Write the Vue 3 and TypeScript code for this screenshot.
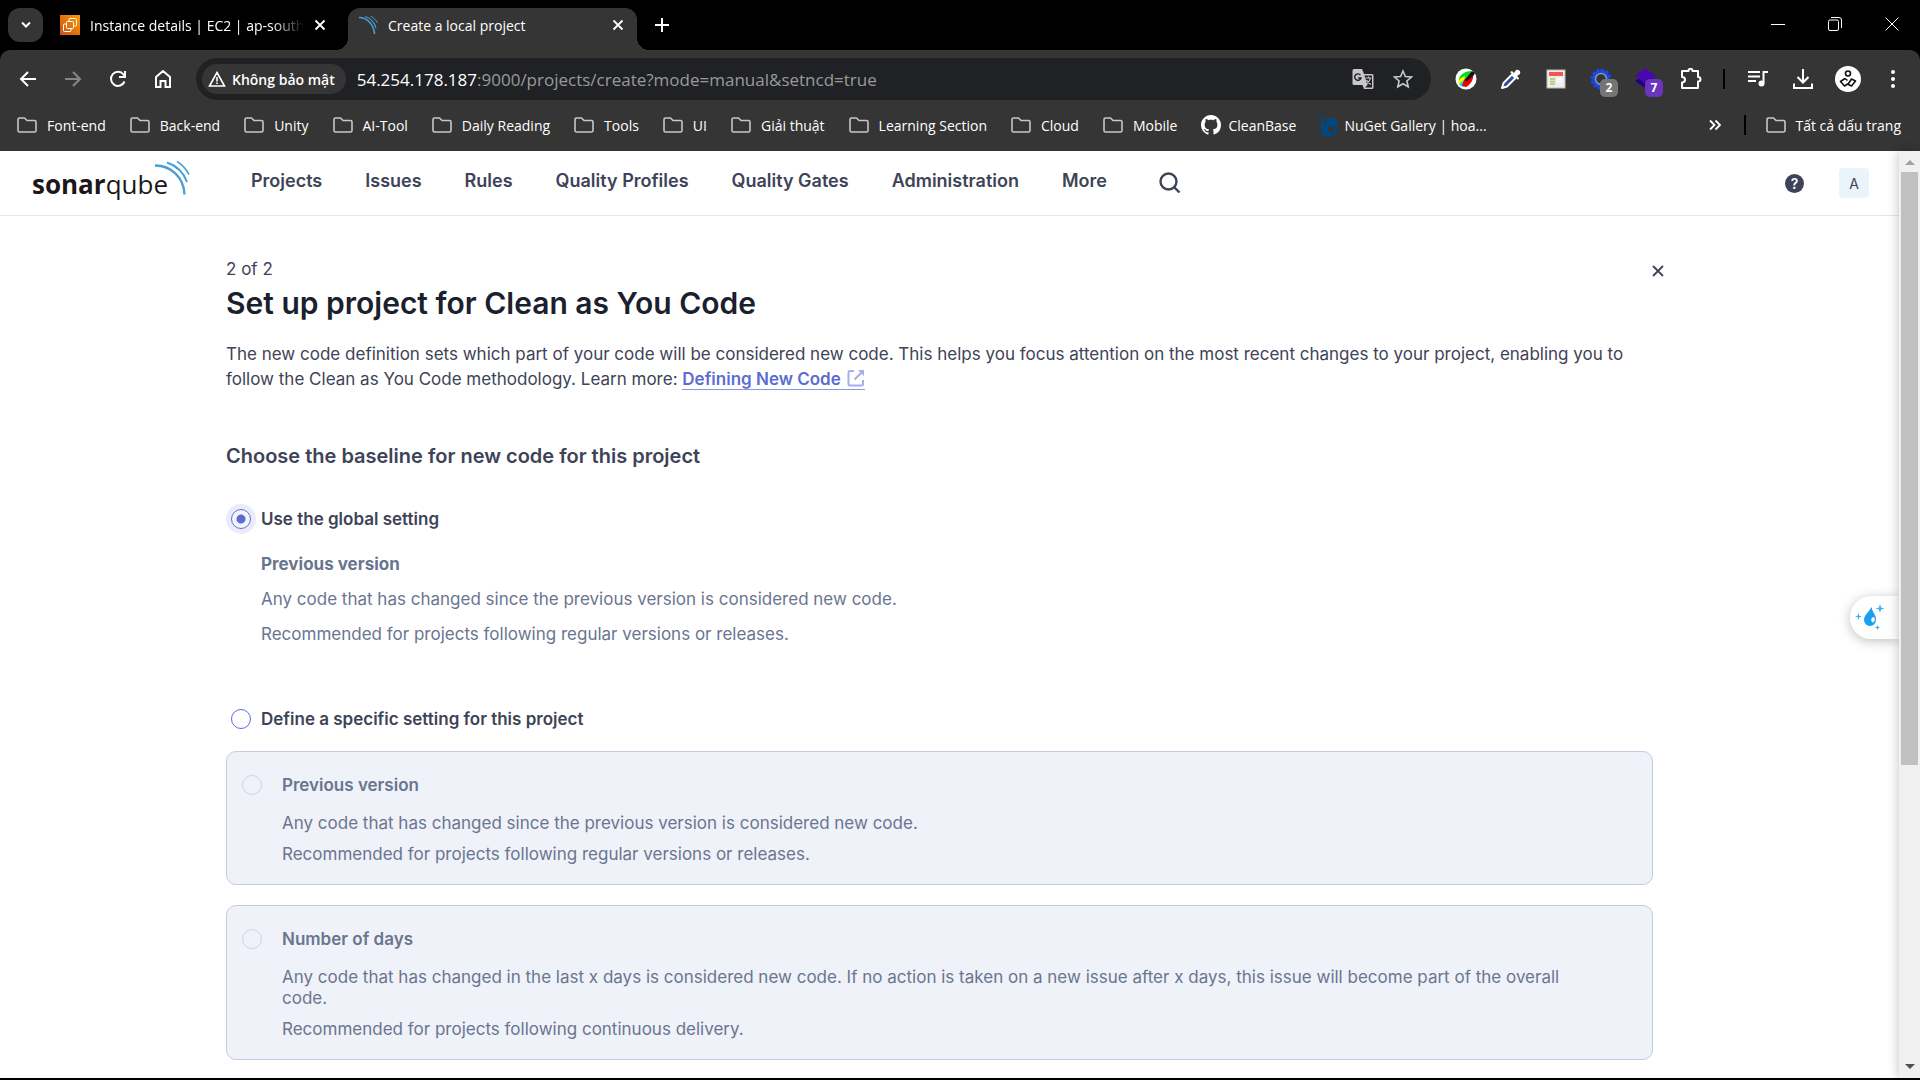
<script setup lang="ts">
import { ref } from 'vue'

interface Bookmark {
  label: string
  kind: 'folder' | 'github' | 'nuget'
}

interface Baseline {
  id: string
  title: string
  text: string
  advice: string
}

const bookmarks: Bookmark[] = [
  { label: 'Font-end', kind: 'folder' },
  { label: 'Back-end', kind: 'folder' },
  { label: 'Unity', kind: 'folder' },
  { label: 'AI-Tool', kind: 'folder' },
  { label: 'Daily Reading', kind: 'folder' },
  { label: 'Tools', kind: 'folder' },
  { label: 'UI', kind: 'folder' },
  { label: 'Giải thuật', kind: 'folder' },
  { label: 'Learning Section', kind: 'folder' },
  { label: 'Cloud', kind: 'folder' },
  { label: 'Mobile', kind: 'folder' },
  { label: 'CleanBase', kind: 'github' },
  { label: 'NuGet Gallery | hoa...', kind: 'nuget' },
]

const navItems = ['Projects', 'Issues', 'Rules', 'Quality Profiles', 'Quality Gates', 'Administration', 'More']

const baselines: Baseline[] = [
  {
    id: 'previous-version',
    title: 'Previous version',
    text: 'Any code that has changed since the previous version is considered new code.',
    advice: 'Recommended for projects following regular versions or releases.',
  },
  {
    id: 'number-of-days',
    title: 'Number of days',
    text: 'Any code that has changed in the last x days is considered new code. If no action is taken on a new issue after x days, this issue will become part of the overall code.',
    advice: 'Recommended for projects following continuous delivery.',
  },
]

const scope = ref<'global' | 'specific'>('global')
const baseline = ref('')
const path = ref(':9000/projects/create?mode=manual&setncd=true')
</script>

<template>
  <div class="window">
    <header class="tabs">
      <button class="tab-search" aria-label="Search tabs">
        <svg width="12" height="8" viewBox="0 0 12 8"><path d="M2 1.5l4 4 4-4" fill="none" stroke="#fff" stroke-width="2" /></svg>
      </button>
      <div class="tab">
        <svg width="20" height="20" viewBox="0 0 20 20">
          <defs>
            <linearGradient id="ec2" x1="0" y1="1" x2="1" y2="0">
              <stop offset="0" stop-color="#c8511b" />
              <stop offset="1" stop-color="#f90" />
            </linearGradient>
          </defs>
          <rect width="20" height="20" fill="url(#ec2)" />
          <g fill="none" stroke="#fff" stroke-width="1">
            <rect x="6.500" y="6.500" width="7" height="7" rx="1" />
            <path d="M9 6V4.500a1 1 0 0 1 1-1h5.500a1 1 0 0 1 1 1V10a1 1 0 0 1-1 1H14M6 9H4.500a1 1 0 0 0-1 1v5.500a1 1 0 0 0 1 1H10a1 1 0 0 0 1-1V14" />
          </g>
        </svg>
        <span class="tab-title faded">Instance details | EC2 | ap-south</span>
        <button class="tab-close" aria-label="Close tab">
          <svg width="12" height="12" viewBox="0 0 12 12"><path d="M1.500 1.500l9 9M10.500 1.500l-9 9" stroke="#fff" stroke-width="1.800" /></svg>
        </button>
      </div>
      <div class="tab active">
        <svg width="20" height="20" viewBox="0 0 20 20" fill="none" stroke="#4b9fd5">
          <path d="M1 2.500c8 0 15 7 15.500 16.500" stroke-width="1.600" />
          <path d="M7 1.500c5 1.500 9.500 6 11 11.500" stroke-width="1.200" />
          <path d="M12.500 1c3 1.500 5.500 4 7 7" stroke-width="1" />
        </svg>
        <span class="tab-title">Create a local project</span>
        <button class="tab-close" aria-label="Close tab">
          <svg width="12" height="12" viewBox="0 0 12 12"><path d="M1.500 1.500l9 9M10.500 1.500l-9 9" stroke="#fff" stroke-width="1.800" /></svg>
        </button>
      </div>
      <button class="new-tab" aria-label="New tab">
        <svg width="14" height="14" viewBox="0 0 14 14"><path d="M7 0v14M0 7h14" stroke="#fff" stroke-width="2" /></svg>
      </button>
      <div class="window-controls">
        <button aria-label="Minimize"><svg width="14" height="14" viewBox="0 0 14 14"><path d="M0 7.500h14" stroke="#fff" /></svg></button>
        <button aria-label="Restore">
          <svg width="14" height="14" viewBox="0 0 14 14" fill="none" stroke="#fff">
            <rect x="0.500" y="3" width="10" height="10.500" rx="1.500" />
            <path d="M3 .5h8a2.500 2.500 0 0 1 2.500 2.500v8" />
          </svg>
        </button>
        <button aria-label="Close"><svg width="14" height="14" viewBox="0 0 14 14"><path d="M.5.5l13 13M13.500.5l-13 13" stroke="#fff" /></svg></button>
      </div>
    </header>

    <div class="chrome">
      <div class="toolbar">
        <div class="nav-buttons">
          <button aria-label="Back"><svg width="18" height="18" viewBox="0 0 18 18" fill="none" stroke="#fff" stroke-width="2"><path d="M17 9H2M9 2L2 9l7 7" /></svg></button>
          <button aria-label="Forward" disabled><svg width="18" height="18" viewBox="0 0 18 18" fill="none" stroke="#868686" stroke-width="2"><path d="M1 9h15M9 2l7 7-7 7" /></svg></button>
          <button aria-label="Reload">
            <svg width="18" height="18" viewBox="0 0 18 18" fill="none" stroke="#fff" stroke-width="2"><path d="M15.500 11.500A7 7 0 1 1 14.500 4.500L16 6.500" /><path d="M16 1v6h-6" /></svg>
          </button>
          <button aria-label="Home"><svg width="18" height="18" viewBox="0 0 18 18" fill="none" stroke="#fff" stroke-width="2"><path d="M2 7l7-6 7 6v10h-4.500v-6h-5v6H2z" /></svg></button>
        </div>
        <div class="address">
          <button class="chip">
            <svg width="18" height="16" viewBox="0 0 18 16" fill="none" stroke="#fff" stroke-width="1.600"><path d="M9 1.500L16.500 15h-15z" /><path d="M9 6v4.500M9 11.500v1.600" /></svg>
            Không bảo mật
          </button>
          <span class="host">54.254.178.187</span>
          <input v-model="path" class="path" type="text" aria-label="Address" />
          <button aria-label="Translate">
            <svg width="22" height="22" viewBox="0 0 22 22">
              <path d="M2 1h8l2 5h8a1.500 1.500 0 0 1 1.500 1.500v12a1.500 1.500 0 0 1-1.500 1.500h-8l-1.500-4H2a1.500 1.500 0 0 1-1.500-1.500v-13A1.500 1.500 0 0 1 2 1z" fill="#c7c7c7" />
              <path d="M12.500 7.500h7.500v12h-7l2.500-2.500z" fill="#202124" />
              <path d="M8.500 7.200A3.200 3.200 0 1 0 9 10H6.200" fill="none" stroke="#202124" stroke-width="1.400" />
              <path d="M13.500 10h6M16.500 8.500V10M18.500 10c-.5 2.500-2 4.500-4 6M14.500 12c1 2 2.500 3.500 4.500 4.500" fill="none" stroke="#c7c7c7" stroke-width="1.200" />
            </svg>
          </button>
          <button aria-label="Bookmark this page">
            <svg width="20" height="20" viewBox="0 0 20 20" fill="none" stroke="#c7c7c7" stroke-width="1.600"><path d="M10 2l2.400 5.500 6 .5-4.500 4 1.300 5.800L10 14.700l-5.200 3.100L6.100 12 1.600 8l6-.5z" /></svg>
          </button>
        </div>
        <div class="extensions">
          <button aria-label="Color picker extension">
            <svg width="22" height="22" viewBox="0 0 22 22">
              <circle cx="11" cy="11" r="10.500" fill="#fff" />
              <path d="M4 13C3 8 9 3 17 3c-2 3-6 8-12 13z" fill="#0d2" />
              <path d="M3 14c1-3 4-5 7-6l-1 6-2 4c-2 0-4-2-4-4z" fill="#ff0" />
              <path d="M4 16l5-4 1 6c-2 1-5 0-6-2z" fill="#0df" />
              <path d="M7 18l2-6 8-8c3 4 0 12-6 15z" fill="#e00" />
              <path d="M10 12l6-8a2 2 0 0 1 3 3l-7 6z" fill="#111" />
            </svg>
          </button>
          <button aria-label="Eyedropper extension">
            <svg width="22" height="22" viewBox="0 0 22 22">
              <path d="M2 20l1.500-5L12 6.500l3.500 3.500L7 18.500z" fill="#2b4a9f" stroke="#fff" stroke-width="2" stroke-linejoin="round" />
              <path d="M10 4l2-1 2 2 2-3a3 3 0 0 1 4 4l-3 2 2 2-1 2z" fill="#fff" />
            </svg>
          </button>
          <button aria-label="Page notes extension">
            <svg width="20" height="20" viewBox="0 0 20 20">
              <rect x="1" y="1" width="18" height="18" fill="#eee" stroke="#bbb" />
              <rect x="3" y="3" width="14" height="4" fill="#f5564f" />
              <path d="M4 10h5M4 12.500h5M4 15h5" stroke="#9bd05b" stroke-width="1.500" />
              <path d="M11 10h5M11 12.500h5" stroke="#fff" stroke-width="1.500" />
            </svg>
          </button>
          <button class="badged" aria-label="Gear extension, 2">
            <svg width="22" height="22" viewBox="0 0 22 22" fill="none">
              <circle cx="11" cy="11" r="9" stroke="#1548f5" stroke-width="3" stroke-dasharray="2.800 1.900" />
              <circle cx="11" cy="11" r="7.500" stroke="#1548f5" stroke-width="2.500" />
              <circle cx="11" cy="11" r="5.500" stroke="#8b97ad" stroke-width="1.500" />
            </svg>
            <span class="badge">2</span>
          </button>
          <button class="badged" aria-label="Layers extension, 7">
            <svg width="22" height="22" viewBox="0 0 22 22">
              <path d="M0 13l11-7 11 7-9 9z" fill="#230078" />
              <path d="M0 8l10-8 11 8-10 8z" fill="#4a06b0" />
            </svg>
            <span class="badge violet">7</span>
          </button>
          <button aria-label="Extensions">
            <svg width="22" height="22" viewBox="0 0 22 22" fill="none" stroke="#fff" stroke-width="2" stroke-linejoin="round"><path d="M2 3h6.500c0-3 4-3 4 0H18v6c3.300 0 3.300 4.500 0 4.500V20H2v-5.500c4 0 4-5.500 0-5.500z" /></svg>
          </button>
        </div>
        <span class="divider"></span>
        <div class="extensions">
          <button aria-label="Media controls">
            <svg width="22" height="20" viewBox="0 0 22 20" fill="none" stroke="#fff" stroke-width="2"><path d="M1 3h12M1 7.500h12M1 12h8M16.500 14V3H21" /><circle cx="14.500" cy="14.500" r="2" fill="#fff" /></svg>
          </button>
          <button aria-label="Downloads">
            <svg width="22" height="22" viewBox="0 0 22 22" fill="none" stroke="#fff" stroke-width="2"><path d="M11 1v13M5.500 9l5.500 5.500L16.500 9M2 15.500V20h18v-4.500" /></svg>
          </button>
          <button aria-label="Profile">
            <svg width="26" height="26" viewBox="0 0 26 26" fill="none" stroke="#111" stroke-width="1.600">
              <circle cx="13" cy="13" r="13" fill="#fff" stroke="none" />
              <circle cx="13" cy="7.500" r="2.500" />
              <path d="M10 12.500L5.500 15.500l4 4.500 4-2.500 3-4.500 4 2-4 5-3-1.500M10 12.500l2.500 2" stroke-linejoin="round" />
            </svg>
          </button>
          <button aria-label="Menu"><svg width="4" height="18" viewBox="0 0 4 18" fill="#fff"><circle cx="2" cy="2" r="2" /><circle cx="2" cy="9" r="2" /><circle cx="2" cy="16" r="2" /></svg></button>
        </div>
      </div>

      <nav class="bookmarks" aria-label="Bookmarks">
        <a v-for="item in bookmarks" :key="item.label" href="#" :class="['bookmark', item.kind]">
          <svg v-if="item.kind === 'folder'" width="20" height="16" viewBox="0 0 20 16" fill="none" stroke="#c7c7c7" stroke-width="1.600"><path d="M1 13.500v-11A1.500 1.500 0 0 1 2.500 1h5L10 3.500h7.500A1.500 1.500 0 0 1 19 5v8.500a1.500 1.500 0 0 1-1.500 1.500h-15A1.500 1.500 0 0 1 1 13.500z" /></svg>
          <svg v-else-if="item.kind === 'github'" width="20" height="20" viewBox="0 0 16 16" fill="#fff"><path d="M8 0C3.580 0 0 3.580 0 8c0 3.540 2.290 6.530 5.470 7.590.4.070.55-.17.55-.38 0-.19-.01-.82-.01-1.490-2.010.37-2.530-.49-2.690-.94-.09-.23-.48-.94-.82-1.130-.28-.15-.68-.52-.01-.53.63-.01 1.080.58 1.230.82.72 1.210 1.870.87 2.330.66.07-.52.28-.87.51-1.070-1.780-.2-3.640-.89-3.640-3.950 0-.87.31-1.590.82-2.150-.08-.2-.36-1.020.08-2.120 0 0 .67-.21 2.200.82.64-.18 1.320-.27 2-.27s1.360.09 2 .27c1.530-1.040 2.200-.82 2.200-.82.44 1.100.16 1.920.08 2.120.51.56.82 1.270.82 2.150 0 3.070-1.870 3.750-3.650 3.950.29.25.54.73.54 1.480 0 1.070-.01 1.930-.01 2.200 0 .21.15.46.55.38A8.010 8.010 0 0 0 16 8c0-4.420-3.580-8-8-8z" /></svg>
          <svg v-else width="20" height="24" viewBox="0 0 20 24"><circle cx="2" cy="2" r="1.500" fill="#004880" /><rect x="4" y="5" width="16" height="18" rx="5.500" fill="#004880" /><circle cx="8" cy="10" r="2" fill="#353535" /><circle cx="14" cy="16.500" r="3.300" fill="#353535" /></svg>
          {{ item.label }}
        </a>
        <button class="overflow" aria-label="More bookmarks"><svg width="12" height="12" viewBox="0 0 12 12" fill="none" stroke="#fff" stroke-width="1.800"><path d="M1 1.500L5.500 6 1 10.500M6.500 1.500L11 6l-4.500 4.500" /></svg></button>
        <span class="divider"></span>
        <a href="#" class="bookmark all">
          <svg width="20" height="16" viewBox="0 0 20 16" fill="none" stroke="#c7c7c7" stroke-width="1.600"><path d="M1 13.500v-11A1.500 1.500 0 0 1 2.500 1h5L10 3.500h7.500A1.500 1.500 0 0 1 19 5v8.500a1.500 1.500 0 0 1-1.500 1.500h-15A1.500 1.500 0 0 1 1 13.500z" /></svg>
          Tất cả dấu trang
        </a>
      </nav>
    </div>

    <div class="viewport">
      <div class="page">
        <header class="site-header">
          <a href="#" class="logo" aria-label="SonarQube">
            <span class="logo-text"><b>sonar</b>qube</span>
            <svg width="36" height="34" viewBox="0 0 36 34" fill="none" stroke="#4b9fd5">
              <path d="M1 4.500c16 0 29 12 29.500 29" stroke-width="2.400" />
              <path d="M13 1.500c9 3 16.500 10 20 19.500" stroke-width="2" />
              <path d="M23 .5c5 3 9 7.500 12 13" stroke-width="1.600" />
            </svg>
          </a>
          <nav class="site-nav" aria-label="Main">
            <a v-for="item in navItems" :key="item" href="#">{{ item }}</a>
          </nav>
          <button class="search" aria-label="Search">
            <svg width="22" height="22" viewBox="0 0 22 22" fill="none" stroke="#3e4357" stroke-width="2.400"><circle cx="9.500" cy="9.500" r="8" /><path d="M15 15l5.500 5.500" /></svg>
          </button>
          <button class="help" aria-label="Help">?</button>
          <button class="avatar" aria-label="Account">A</button>
        </header>

        <main class="content">
          <div class="step-row">
            <span>2 of 2</span>
            <button class="close" aria-label="Close">
              <svg width="12" height="12" viewBox="0 0 12 12"><path d="M1 1l10 10M11 1L1 11" stroke="#3e4357" stroke-width="1.800" /></svg>
            </button>
          </div>
          <h1>Set up project for Clean as You Code</h1>
          <p class="intro">
            The new code definition sets which part of your code will be considered new code. This helps you focus attention on the most recent changes to your project, enabling you to<br />
            follow the Clean as You Code methodology. Learn more:
            <a href="#" class="doc-link">Defining New Code <svg width="18" height="18" viewBox="0 0 18 18" fill="none" stroke="#a6adf0" stroke-width="2"><path d="M7 2H3a1.500 1.500 0 0 0-1.500 1.500V15A1.500 1.500 0 0 0 3 16.500h11.500A1.500 1.500 0 0 0 16 15v-4M7.500 10.500L15 3" /><path d="M11 1h6v6z" fill="#a6adf0" stroke="none" /></svg></a>
          </p>

          <h2>Choose the baseline for new code for this project</h2>

          <div class="choice">
            <input id="scope-global" v-model="scope" type="radio" name="scope" value="global" />
            <label for="scope-global">Use the global setting</label>
          </div>
          <div class="global-info">
            <b>Previous version</b>
            <span>Any code that has changed since the previous version is considered new code.</span>
            <span>Recommended for projects following regular versions or releases.</span>
          </div>

          <div class="choice">
            <input id="scope-specific" v-model="scope" type="radio" name="scope" value="specific" />
            <label for="scope-specific">Define a specific setting for this project</label>
          </div>
          <div class="cards">
            <section v-for="item in baselines" :key="item.id" class="card">
              <input :id="item.id" v-model="baseline" type="radio" name="baseline" :value="item.id" :disabled="scope === 'global'" />
              <div class="card-body">
                <label :for="item.id">{{ item.title }}</label>
                <p>{{ item.text }}</p>
                <p>{{ item.advice }}</p>
              </div>
            </section>
          </div>
        </main>

        <button class="assistant" aria-label="Assistant">
          <svg width="30" height="28" viewBox="0 0 30 28">
            <path d="M16.500 3c1 6 5 8 4.500 13a6 6 0 0 1-12 0c0-5 5-8 7.500-13z" fill="#189ff2" />
            <path d="M18.500 13a3 3 0 0 1-.8 5.500 3 3 0 0 1 .8-5.500z" fill="#fff" />
            <path d="M25 0l1 3.500 3.500 1-3.500 1-1 3.500-1-3.500-3.500-1 3.500-1zM3.500 9l.8 2.700L7 12.500l-2.700.8-.8 2.700-.8-2.700L0 12.500l2.700-.8zM22.500 21l.7 1.800 1.800.7-1.800.7-.7 1.800-.7-1.800-1.800-.7 1.800-.7z" fill="#35aff5" />
          </svg>
        </button>
      </div>

      <div class="scrollbar" aria-hidden="true">
        <svg width="10" height="5" viewBox="0 0 10 5"><path d="M5 0l5 5H0z" fill="#a3a3a3" /></svg>
        <div class="track"><div class="thumb"></div></div>
        <svg width="10" height="5" viewBox="0 0 10 5"><path d="M5 5l5-5H0z" fill="#505050" /></svg>
      </div>
    </div>
  </div>
</template>

<style>
body {
  margin: 0;
  background: #000;
}
</style>

<style scoped>
* {
  box-sizing: border-box;
}

button {
  display: flex;
  align-items: center;
  justify-content: center;
  padding: 0;
  border: 0;
  background: none;
  font: inherit;
  color: inherit;
}

svg {
  flex: none;
}

a {
  color: inherit;
  text-decoration: none;
}

.window {
  display: flex;
  flex-direction: column;
  height: 100vh;
  padding-bottom: 2px;
  overflow: hidden;
  background: #000;
  color: #fff;
  font-family: 'Open Sans', 'Noto Sans', sans-serif;
  font-size: 14px;
}

/* Tab strip */
.tabs {
  display: flex;
  flex: none;
  height: 50px;
  padding: 8px 0 0 8px;
}

.tab-search {
  width: 35px;
  height: 34px;
  border-radius: 12px;
  background: #353535;
}

.tab {
  display: flex;
  align-items: center;
  gap: 10px;
  width: 305px;
  height: 42px;
  padding: 0 22px 8px 17px;
}

.tab.active {
  position: relative;
  width: 289px;
  padding: 0 13px 8px 10px;
  border-radius: 12px 12px 0 0;
  background: #353535;
}

.tab.active::before,
.tab.active::after {
  content: '';
  position: absolute;
  bottom: 0;
  width: 12px;
  height: 12px;
}

.tab.active::before {
  right: 100%;
  background: radial-gradient(circle at 0 0, transparent 12px, #353535 12px);
}

.tab.active::after {
  left: 100%;
  background: radial-gradient(circle at 100% 0, transparent 12px, #353535 12px);
}

.tab-title {
  flex: 1;
  white-space: nowrap;
}

.faded {
  mask-image: linear-gradient(90deg, #000 85%, transparent);
}

.new-tab {
  width: 50px;
  height: 34px;
}

.window-controls {
  display: flex;
  margin-left: auto;
}

.window-controls button {
  width: 57px;
  height: 32px;
}

/* Toolbar */
.chrome {
  flex: none;
  height: 101px;
  border-radius: 10px 10px 0 0;
  background: #353535;
}

.toolbar {
  display: flex;
  align-items: center;
  height: 58px;
  padding: 0 5px;
}

.nav-buttons,
.extensions {
  display: flex;
  align-items: center;
}

.nav-buttons button,
.extensions button {
  width: 45px;
  height: 40px;
}

.address {
  display: flex;
  flex: 1;
  align-items: center;
  height: 42px;
  margin: 0 12px 0 11px;
  padding: 0 8px 0 6px;
  border-radius: 21px;
  background: #202124;
  font-size: 17px;
}

.chip {
  gap: 6px;
  height: 30px;
  margin-right: 11px;
  padding: 0 11px 0 6px;
  border-radius: 15px;
  background: #353535;
  font-size: 14px;
  font-weight: 600;
}

.path {
  flex: 1;
  min-width: 0;
  padding: 0;
  border: 0;
  outline: 0;
  background: none;
  color: #9a9a9c;
  font: inherit;
}

.address > button:not(.chip) {
  width: 40px;
}

.badged {
  position: relative;
}

.badge {
  position: absolute;
  right: 5px;
  bottom: 2px;
  width: 18px;
  height: 18px;
  border-radius: 5px;
  background: #757575;
  font-size: 12px;
  font-weight: 700;
  line-height: 18px;
  text-align: center;
}

.violet {
  background: #6a35bd;
}

.divider {
  flex: none;
  width: 2px;
  height: 20px;
  margin: 0 10px;
  background: #000;
}

/* Bookmarks bar */
.bookmarks {
  display: flex;
  align-items: center;
  height: 34px;
  padding: 0 19px 0 17px;
}

.bookmark {
  display: flex;
  align-items: center;
  gap: 10px;
  margin-right: 24px;
  white-space: nowrap;
}

.github,
.nuget {
  gap: 7px;
}

.nuget {
  margin-left: -3px;
}

.overflow {
  width: 24px;
  height: 28px;
  margin-left: auto;
  margin-right: 7px;
}

.all {
  margin: 0 0 0 10px;
}

/* Page */
.viewport {
  display: flex;
  flex: 1;
  min-height: 0;
  background: #fff;
}

.page {
  flex: 1;
  position: relative;
  overflow: hidden;
  color: #3e4357;
  font-family: Inter, sans-serif;
  font-size: 17px;
}

.site-header {
  display: flex;
  align-items: center;
  height: 65px;
  padding: 0 30px 0 32px;
  border-bottom: 1px solid #e6e6e9;
}

.logo {
  display: flex;
  align-items: flex-start;
  width: 219px;
  height: 44px;
}

.logo-text {
  padding-top: 5px;
  color: #1b171b;
  font-family: 'Open Sans', sans-serif;
  font-size: 26px;
  line-height: 36px;
}

.logo svg {
  margin-left: -14px;
}

.site-nav {
  display: flex;
  gap: 43px;
  padding-bottom: 6px;
  font-weight: 600;
  font-size: 18px;
}

.search {
  width: 42px;
  height: 42px;
  margin-left: 42px;
}

.help {
  width: 19px;
  height: 19px;
  margin-left: auto;
  border-radius: 50%;
  background: #3e4357;
  color: #fff;
  font-size: 14px;
  font-weight: 600;
}

.avatar {
  width: 30px;
  height: 30px;
  margin-left: 35px;
  border-radius: 4px;
  background: #e9f4fb;
  font-size: 14px;
}

.content {
  padding: 40px 226px 0;
}

.step-row {
  display: flex;
  align-items: center;
  justify-content: space-between;
  height: 25px;
}

.close {
  width: 30px;
  height: 30px;
  padding-top: 4px;
}

h1 {
  margin: 4px 0 21px;
  color: #1b1f2e;
  font-size: 30px;
  font-weight: 600;
  line-height: 36px;
}

.intro {
  margin: 0;
  line-height: 25px;
  white-space: nowrap;
}

.doc-link {
  border-bottom: 1px solid #8c94e8;
  color: #5d6cd0;
  font-weight: 600;
}

.doc-link svg {
  margin-left: 2px;
  vertical-align: -2px;
}

h2 {
  margin: 52px 0 38px;
  font-size: 20px;
  font-weight: 600;
  line-height: 25px;
}

input[type='radio'] {
  flex: none;
  width: 20px;
  height: 20px;
  margin: 0;
  border: 1px solid #5d6cd0;
  border-radius: 50%;
  appearance: none;
}

input[type='radio']:checked {
  background: radial-gradient(circle, #5d6cd0 4px, #f3f4fe 5px);
  box-shadow: 0 0 0 5px #ebecfb;
}

input[type='radio']:disabled {
  border-color: #cfd3e8;
}

.choice {
  display: flex;
  align-items: center;
  gap: 10px;
  height: 24px;
  padding-left: 5px;
}

label {
  font-weight: 600;
}

.global-info {
  display: flex;
  flex-direction: column;
  gap: 10px;
  padding: 21px 0 60px 35px;
  color: #6a7590;
  line-height: 25px;
}

.cards {
  display: flex;
  flex-direction: column;
  gap: 20px;
  margin: 20px 20px 0 0;
}

.card {
  display: flex;
  gap: 20px;
  padding: 23px 52px 19px 15px;
  border: 1px solid #c5cbe0;
  border-radius: 10px;
  background: #eff2f9;
  color: #6a7590;
  line-height: 21px;
}

.card-body {
  flex: 1;
}

.card p {
  margin: 10px 0 0;
}

.card label + p {
  margin-top: 17px;
}

.assistant {
  position: absolute;
  top: 445px;
  right: 0;
  width: 49px;
  height: 43px;
  padding-right: 9px;
  border-radius: 21px 0 0 21px;
  background: #fff;
  box-shadow: 0 2px 12px rgba(0, 0, 0, 0.25);
}

.scrollbar {
  display: flex;
  flex: none;
  flex-direction: column;
  align-items: center;
  width: 21px;
  padding: 9px 0;
  position: relative;
  background: #f0f0f0;
  box-shadow: 0 0 12px rgba(0, 0, 0, 0.25);
}

.track {
  flex: 1;
  width: 17px;
  margin: 7px 0;
}

.thumb {
  height: 67%;
  background: #c0c0c0;
}
</style>
